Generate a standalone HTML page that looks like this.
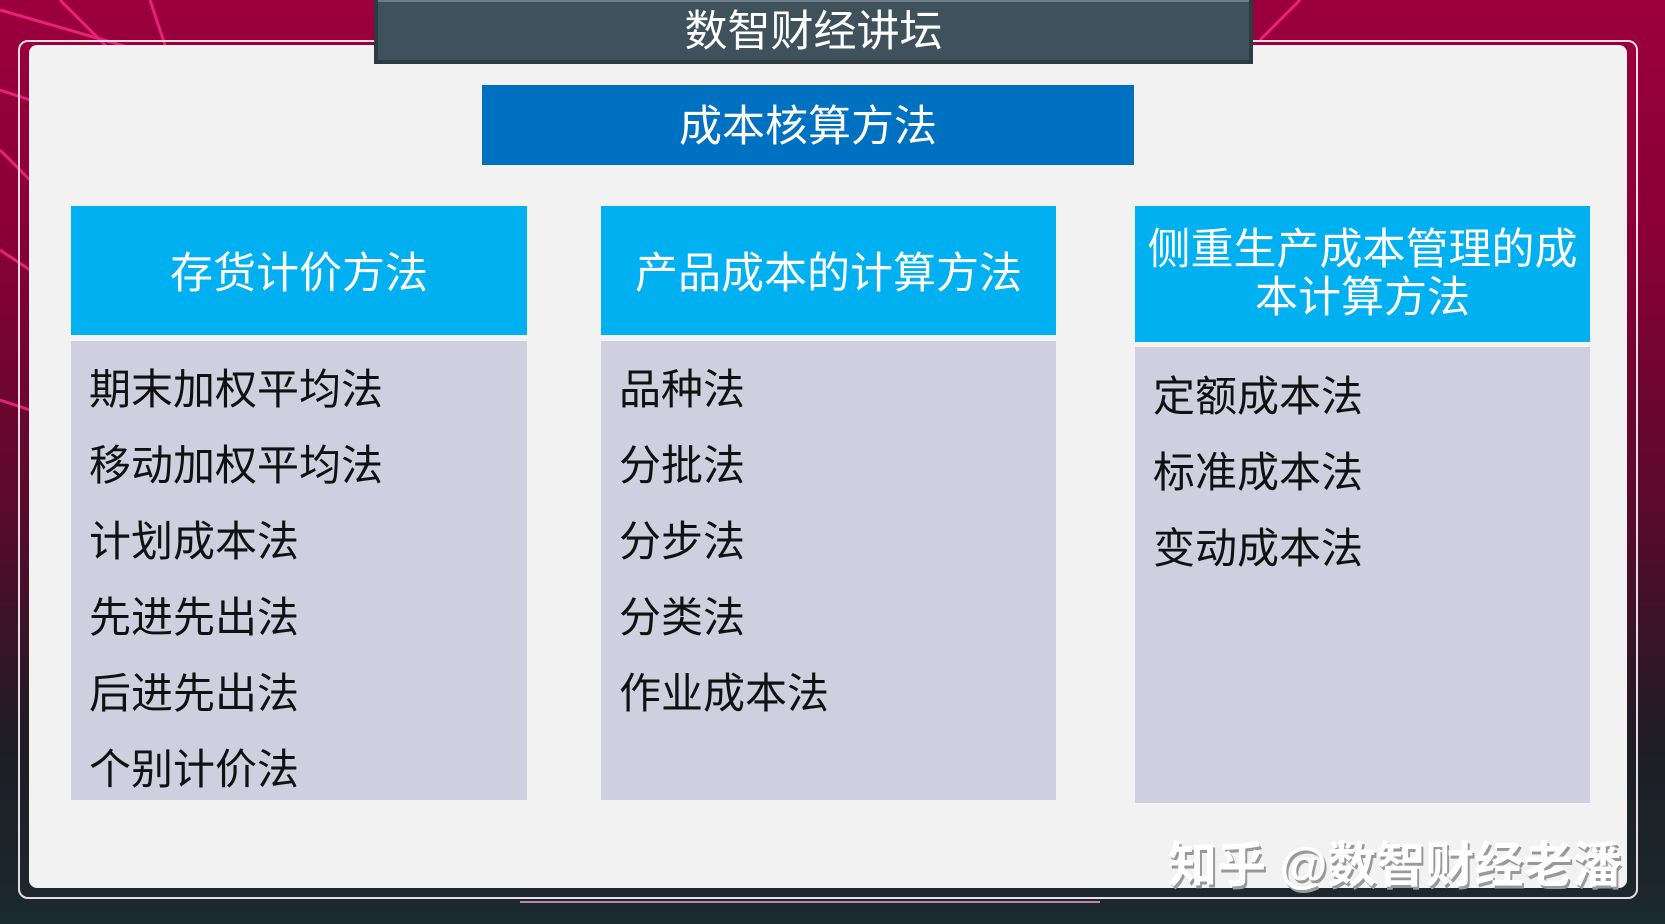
<!DOCTYPE html>
<html><head><meta charset="utf-8"><style>
*{margin:0;padding:0;box-sizing:border-box}
body{width:1665px;height:924px;overflow:hidden;position:relative;font-family:"Liberation Sans","Noto Sans CJK SC",sans-serif;background:linear-gradient(180deg,#9c003c 0%,#8a0036 25%,#5a0a2a 55%,#1e1c24 80%,#1b2a30 100%)}
.a{position:absolute}
.frame{left:18px;top:40px;width:1620px;height:859px;border:2px solid #e8dce4;border-radius:10px}
.panel{left:29px;top:45px;width:1598px;height:843px;background:#f2f2f2;border-radius:8px}
.title{left:374px;top:0;width:879px;height:64px;background:#3f525c;border:4px solid #2d3b42;border-top:none;box-shadow:inset 0 2px 0 #6b7e88;color:#fff;font-size:43px;text-align:center;line-height:64px}
.blue{left:482px;top:85px;width:652px;height:80px;background:#0070c0;color:#fff;font-size:43px;text-align:center;line-height:84px}
.hd{background:#00b0f0;color:#fff;font-size:43px;text-align:center;display:flex;align-items:center;justify-content:center;line-height:48px;padding-top:6px}
.bd{background:#cfcfdf}
.it{position:absolute;left:18px;font-size:42px;color:#111;line-height:48px}
.wm{left:1168px;top:826px;font-size:49px;color:#fff;font-weight:bold;text-shadow:2px 3px 0 #999}
</style></head><body>
<svg class="a" style="left:0;top:0" width="1665" height="924">
<g stroke="#ff2a8a" stroke-width="3" opacity=".8" fill="none">
<line x1="0" y1="10" x2="380" y2="120"/><line x1="60" y1="0" x2="180" y2="120"/><line x1="150" y1="0" x2="170" y2="60"/><line x1="0" y1="90" x2="30" y2="100"/><line x1="0" y1="150" x2="30" y2="180"/><line x1="0" y1="250" x2="30" y2="270"/><line x1="0" y1="400" x2="30" y2="410"/><line x1="1300" y1="0" x2="1260" y2="40"/>
</g>
<line x1="520" y1="902" x2="1100" y2="902" stroke="#c080b0" stroke-width="2"/>
</svg>
<div class="a frame"></div>
<div class="a panel"></div>
<div class="a title">数智财经讲坛</div>
<div class="a blue">成本核算方法</div>

<div class="a hd" style="left:71px;top:206px;width:456px;height:129px">存货计价方法</div>
<div class="a bd" style="left:71px;top:341px;width:456px;height:459px">
<div class="it" style="top:25px">期末加权平均法</div>
<div class="it" style="top:101px">移动加权平均法</div>
<div class="it" style="top:177px">计划成本法</div>
<div class="it" style="top:253px">先进先出法</div>
<div class="it" style="top:329px">后进先出法</div>
<div class="it" style="top:405px">个别计价法</div>
</div>

<div class="a hd" style="left:601px;top:206px;width:455px;height:129px">产品成本的计算方法</div>
<div class="a bd" style="left:601px;top:341px;width:455px;height:459px">
<div class="it" style="top:25px">品种法</div>
<div class="it" style="top:101px">分批法</div>
<div class="it" style="top:177px">分步法</div>
<div class="it" style="top:253px">分类法</div>
<div class="it" style="top:329px">作业成本法</div>
</div>

<div class="a hd" style="left:1135px;top:206px;width:455px;height:136px;padding-top:0">侧重生产成本管理的成<br>本计算方法</div>
<div class="a bd" style="left:1135px;top:347px;width:455px;height:456px">
<div class="it" style="top:26px">定额成本法</div>
<div class="it" style="top:102px">标准成本法</div>
<div class="it" style="top:178px">变动成本法</div>
</div>

<div class="a wm">知乎 @数智财经老潘</div>
</body></html>
